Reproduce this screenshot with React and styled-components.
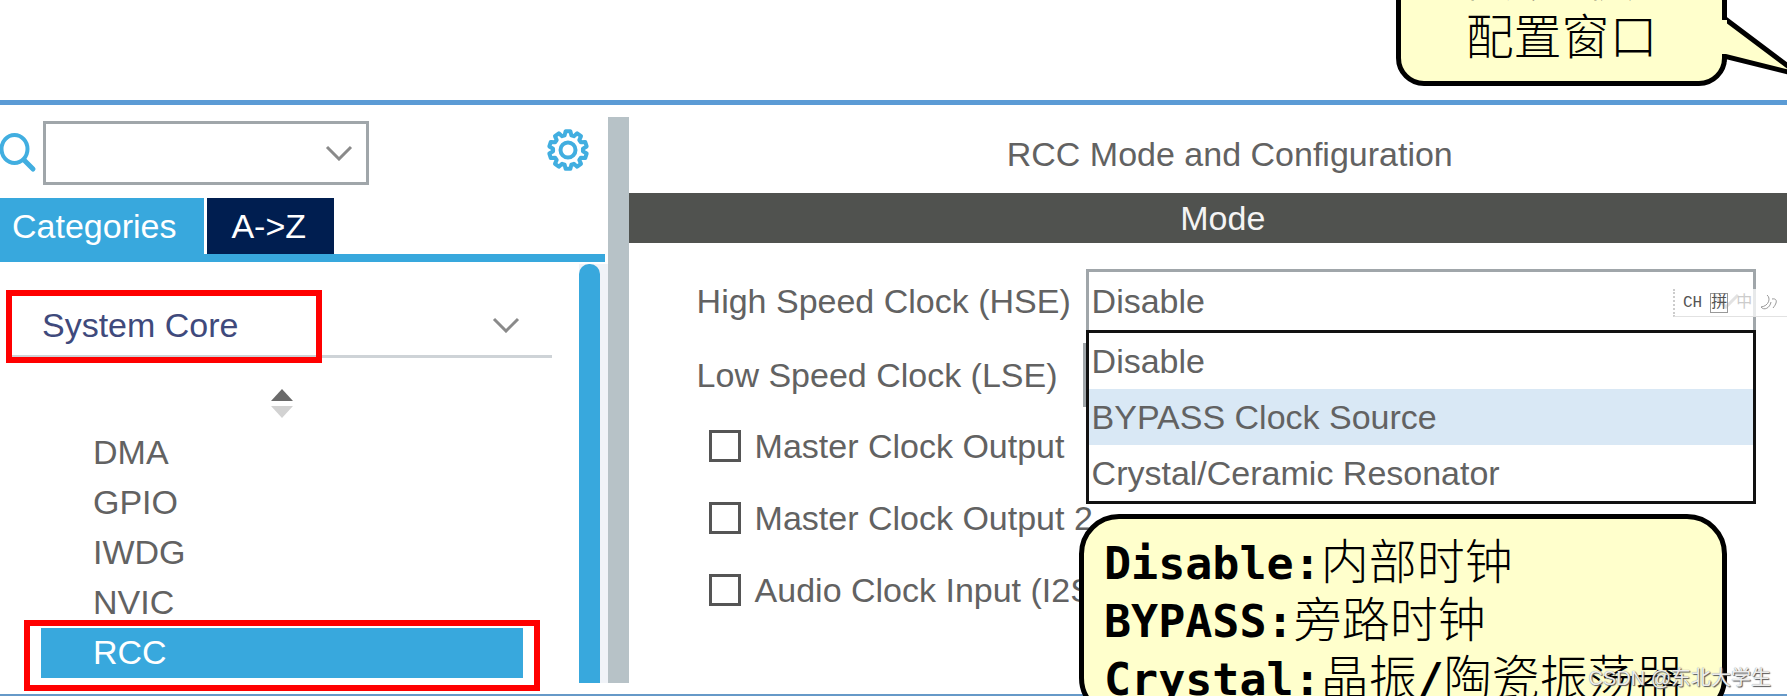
import React from 'react';
import styled, { createGlobalStyle } from 'styled-components';

const peripherals = ['DMA', 'GPIO', 'IWDG', 'NVIC', 'RCC'];
const clockSources = ['Disable', 'BYPASS Clock Source', 'Crystal/Ceramic Resonator'];
const outputs = ['Master Clock Output', 'Master Clock Output 2', 'Audio Clock Input (I2S)'];

const GearIcon = () => {
  const teeth = 10;
  const points = [];
  for (let i = 0; i < teeth; i += 1) {
    [[-0.36, 15], [-0.2, 19], [0.2, 19], [0.36, 15]].forEach(([shift, radius]) => {
      const angle = ((i + shift) * 2 * Math.PI) / teeth;
      points.push(`${22 + radius * Math.sin(angle)},${22 - radius * Math.cos(angle)}`);
    });
  }
  return (
    <svg width="44" height="44" viewBox="0 0 44 44" fill="none" stroke="#41aee0" strokeWidth="4">
      <polygon points={points.join(' ')} strokeLinejoin="round" />
      <circle cx="22" cy="22" r="7.5" />
    </svg>
  );
};

const SearchIcon = () => (
  <svg width="37" height="40" viewBox="0 0 37 40" fill="none" stroke="#41aee0">
    <ellipse cx="14.5" cy="16" rx="13" ry="14" strokeWidth="4" />
    <path d="M24 27L33 36" strokeWidth="5" strokeLinecap="round" />
  </svg>
);

const Chevron = () => (
  <svg width="28" height="16" viewBox="0 0 28 16" fill="none" stroke="#8a8a8a" strokeWidth="3">
    <path d="M2 2L14 14L26 2" />
  </svg>
);

const SortIcon = () => (
  <svg width="22" height="30" viewBox="0 0 22 30">
    <path d="M11 0L22 12H0Z" fill="#6a6a6a" />
    <path d="M0 17H22L11 29Z" fill="#d2d2d2" />
  </svg>
);

const App = () => (
  <Page>
    <GlobalStyle />
    <Slide>
      <TopCallout>
        外设的快速
        <br />
        配置窗口
        <Tail width="80" height="80" viewBox="0 0 80 80">
          <path d="M0 11L78 70L0 50" fill="#ffffcc" />
          <path d="M2 8V12L78 69L2 50V56" fill="none" stroke="#000" strokeWidth="5" />
          <path d="M0 14H5V48H0Z" fill="#ffffcc" />
        </Tail>
      </TopCallout>
    </Slide>
    <Workspace>
      <Sidebar>
        <Toolbar>
          <SearchIcon />
          <SelectWrap $search>
            <Select aria-label="Search" defaultValue="">
              <option value="" />
            </Select>
            <Arrow>
              <Chevron />
            </Arrow>
          </SelectWrap>
          <IconButton aria-label="Settings">
            <GearIcon />
          </IconButton>
        </Toolbar>
        <Tabs>
          <Tab $active>Categories</Tab>
          <Tab>A-&gt;Z</Tab>
        </Tabs>
        <TreeArea>
          <Tree>
            <Group>
              System Core
              <Chevron />
              <GroupMark />
            </Group>
            <SortRow>
              <SortIcon />
            </SortRow>
            <List>
              {peripherals.map(name => (
                <Item key={name} $selected={name === 'RCC'}>
                  {name}
                  {name === 'RCC' && <ItemMark />}
                </Item>
              ))}
            </List>
          </Tree>
          <Scrollbar />
        </TreeArea>
      </Sidebar>
      <Divider />
      <Panel>
        <Title>RCC Mode and Configuration</Title>
        <ModeBar>Mode</ModeBar>
        <Form>
          <Field>
            <label htmlFor="hse">High Speed Clock (HSE)</label>
            <SelectWrap>
              <Select id="hse" defaultValue="Disable">
                {clockSources.map(source => (
                  <option key={source}>{source}</option>
                ))}
              </Select>
              <Arrow>
                <Chevron />
              </Arrow>
              <Menu>
                {clockSources.map((source, i) => (
                  <MenuItem key={source} $hover={i === 1}>
                    {source}
                  </MenuItem>
                ))}
              </Menu>
            </SelectWrap>
          </Field>
          <Field $wide>
            <label htmlFor="lse">Low Speed Clock (LSE)</label>
            <SelectWrap>
              <Select id="lse" defaultValue="">
                <option value="" />
              </Select>
            </SelectWrap>
          </Field>
          <Checks>
            {outputs.map(name => (
              <CheckLabel key={name}>
                <Checkbox type="checkbox" />
                {name}
              </CheckLabel>
            ))}
          </Checks>
        </Form>
      </Panel>
      <ImeBar>
        CH
        <ImeMode>拼</ImeMode>
        <Faded>中</Faded>
        <svg width="20" height="20" viewBox="0 0 20 20" fill="none" stroke="#999" strokeWidth="1">
          <path d="M7 2C11 5 9 13 1 14C4 18 10 15 11 9" />
          <path d="M12 6C17 5 18 9 13 15" />
        </svg>
      </ImeBar>
      <NoteCallout>
        <Note>
          <Term>Disable:</Term>内部时钟
        </Note>
        <Note>
          <Term>BYPASS:</Term>旁路时钟
        </Note>
        <Note>
          <Term>Crystal:</Term>晶振<Term>/</Term>陶瓷振荡器
        </Note>
      </NoteCallout>
    </Workspace>
    <Watermark>CSDN @东北大学生</Watermark>
  </Page>
);

const GlobalStyle = createGlobalStyle`
  * {
    box-sizing: border-box;
  }
  body {
    margin: 0;
    background: #fff;
  }
  button,
  select {
    font: inherit;
    color: inherit;
  }
`;

const Page = styled.div`
  position: relative;
  display: flex;
  flex-direction: column;
  height: 100vh;
  overflow: hidden;
  font-family: 'Liberation Sans', Arial, 'Noto Sans CJK SC', sans-serif;
  font-size: 34px;
  line-height: 40px;
  color: #626262;
`;

const Slide = styled.header`
  position: relative;
  flex: none;
  height: 100px;
`;

const Callout = styled.div`
  position: absolute;
  right: 60px;
  border: 5px solid #000;
  border-radius: 40px;
  background: #ffffcc;
  color: #000;
  font-family: 'Noto Sans CJK SC', sans-serif;
  font-size: 48px;
  font-weight: 300;
  line-height: 58px;
  white-space: nowrap;
`;

const TopCallout = styled(Callout)`
  bottom: 14px;
  width: 331px;
  padding: 15px 0 19px;
  border-radius: 28px;
  text-align: center;
`;

const NoteCallout = styled(Callout)`
  top: 409px;
  width: 648px;
  padding: 10px 20px;
`;

const Note = styled.div`
  display: flex;
  align-items: baseline;
  height: 58px;
`;

const Term = styled.strong`
  font-family: 'DejaVu Sans Mono', monospace;
  font-size: 45px;
  font-weight: 700;
`;

const Tail = styled.svg`
  position: absolute;
  right: -80px;
  bottom: -5px;
`;

const Workspace = styled.main`
  position: relative;
  flex: 1;
  min-height: 0;
  display: grid;
  grid-template-columns: 34% 21px 1fr;
  padding: 12px 0 11px;
  border-top: 5px solid #5b9bd5;
  border-bottom: 2px solid #6699c8;
`;

const Sidebar = styled.aside`
  display: flex;
  flex-direction: column;
  min-height: 0;
`;

const Toolbar = styled.div`
  display: flex;
  align-items: center;
  gap: 6px;
  padding: 4px 18px 13px 0;
`;

const IconButton = styled.button`
  display: flex;
  margin: 0 0 6px auto;
  padding: 0;
  border: 0;
  background: none;
`;

const SelectWrap = styled.div`
  position: relative;
  width: ${({ $search }) => ($search ? '326px' : '100%')};
`;

const Select = styled.select`
  display: block;
  width: 100%;
  height: 64px;
  padding: 0 3px;
  border: 3px solid #a0a6aa;
  border-radius: 0;
  background: #fff;
  appearance: none;
`;

const Arrow = styled.span`
  position: absolute;
  top: 24px;
  right: 16px;
  display: flex;
  pointer-events: none;
`;

const Tabs = styled.div`
  display: flex;
  gap: 3px;
  margin-right: 3px;
  border-bottom: 8px solid #38a8dd;
`;

const Tab = styled.button`
  height: 56px;
  padding: ${({ $active }) => ($active ? '0 28px 0 12px' : '0 28px 0 24px')};
  border: 0;
  background: ${({ $active }) => ($active ? '#38a8dd' : '#001e50')};
  color: #fff;
`;

const TreeArea = styled.div`
  flex: 1;
  display: flex;
  min-height: 0;
  padding-top: 2px;
`;

const Tree = styled.div`
  flex: 1;
  padding: 0 27px 0 12px;
`;

const Scrollbar = styled.div`
  width: 29px;
  background: #f0f3f8;

  &::before {
    content: '';
    display: block;
    width: 21px;
    height: 100%;
    border-radius: 10px 10px 0 0;
    background: #38a8dd;
  }
`;

const Group = styled.div`
  position: relative;
  display: flex;
  align-items: center;
  justify-content: space-between;
  height: 94px;
  padding: 30px 32px 0 30px;
  border-bottom: 3px solid #ced3d7;
  color: #3f4a7c;
`;

const Mark = styled.span`
  position: absolute;
  border: 6px solid #f00;
  pointer-events: none;
`;

const GroupMark = styled(Mark)`
  top: 26px;
  left: -6px;
  width: 316px;
  height: 73px;
`;

const ItemMark = styled(Mark)`
  inset: -8px -17px -13px -17px;
`;

const SortRow = styled.div`
  display: flex;
  justify-content: center;
  height: 70px;
  padding-top: 31px;
`;

const List = styled.ul`
  margin: 0 29px;
  padding: 0;
  list-style: none;
`;

const Item = styled.li`
  position: relative;
  height: 50px;
  padding: 4px 52px;
  background: ${({ $selected }) => ($selected ? '#38a8dd' : 'none')};
  color: ${({ $selected }) => ($selected ? '#fff' : 'inherit')};
`;

const Divider = styled.div`
  background: #b7c2c7;
`;

/* the panel runs on past the right edge of the window */
const Panel = styled.section`
  margin-right: -30px;
`;

const Title = styled.h1`
  margin: 0;
  padding: 17px 0 19px 14px;
  font-size: 34px;
  font-weight: 400;
  line-height: 40px;
  text-align: center;
`;

const ModeBar = styled.h2`
  margin: 0;
  padding: 5px 0;
  background: #50524f;
  color: #f4f4f4;
  font-size: 34px;
  font-weight: 400;
  line-height: 40px;
  text-align: center;
`;

const Form = styled.form`
  padding: 21px 61px 0 68px;
`;

const Field = styled.div`
  display: grid;
  grid-template-columns: ${({ $wide }) => ($wide ? '386px' : '389px')} 1fr;
  align-items: center;
  height: 74px;
`;

const Menu = styled.ul`
  position: absolute;
  z-index: 1;
  top: 61px;
  left: 0;
  right: 0;
  margin: 0;
  padding: 0;
  border: 3px solid #111;
  background: #fff;
  list-style: none;
`;

const MenuItem = styled.li`
  height: 56px;
  padding: 8px 3px;
  background: ${({ $hover }) => ($hover ? '#d9e8f5' : 'none')};
`;

const Checks = styled.div`
  display: flex;
  flex-direction: column;
  gap: 32px;
  padding: 14px 0 0 12px;
`;

const CheckLabel = styled.label`
  display: flex;
  align-items: center;
  gap: 14px;
  white-space: nowrap;
`;

const Checkbox = styled.input`
  width: 32px;
  height: 32px;
  margin: 0;
  border: 3px solid #555;
  background: #fff;
  appearance: none;
`;

const ImeBar = styled.div`
  position: absolute;
  z-index: 2;
  top: 184px;
  right: 0;
  display: flex;
  align-items: center;
  gap: 8px;
  width: 114px;
  height: 28px;
  padding-left: 8px;
  border-left: 2px dotted #ccc;
  border-bottom: 1px solid #e2e2e2;
  background: rgba(255, 255, 255, 0.75);
  color: #555;
  font-family: 'Liberation Mono', 'Noto Sans CJK SC', monospace;
  font-size: 16px;
  line-height: 18px;
`;

const ImeMode = styled.span`
  border: 1px solid #999;
`;

const Faded = styled.span`
  color: #ccc;
`;

const Watermark = styled.div`
  position: absolute;
  z-index: 3;
  right: 16px;
  bottom: 4px;
  color: rgba(255, 255, 255, 0.9);
  font-size: 20px;
  line-height: 28px;
  text-shadow: 1px 1px 1px #555, 0 0 1px #777;
`;

export default App;
